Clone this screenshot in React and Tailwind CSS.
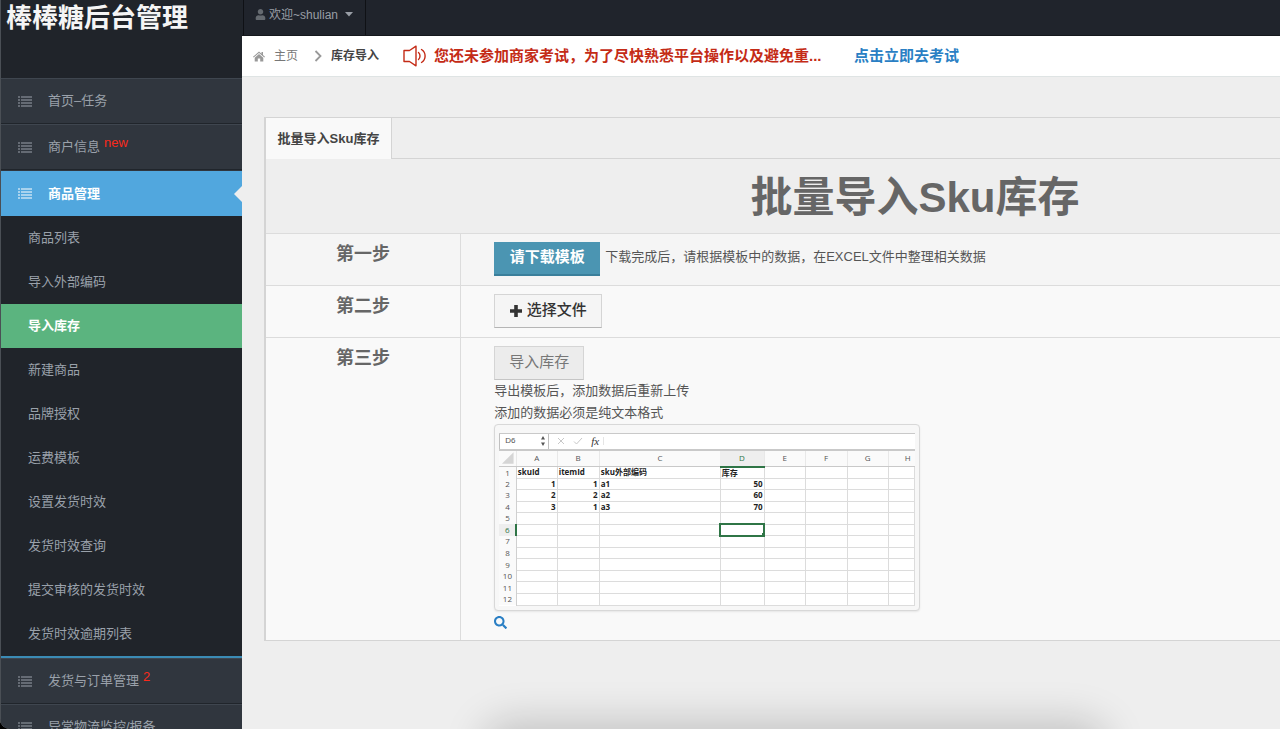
import React, { useState } from "react";
import { FaUser, FaSearch } from "react-icons/fa";

const subItems = [
    "商品列表",
    "导入外部编码",
    "导入库存",
    "新建商品",
    "品牌授权",
    "运费模板",
    "设置发货时效",
    "发货时效查询",
    "提交审核的发货时效",
    "发货时效逾期列表",
];

const columns = ["A", "B", "C", "D", "E", "F", "G", "H"];

const sheetRows = [
    ["skuId", "itemId", "sku外部编码", "库存"],
    ["1", "1", "a1", "50"],
    ["2", "2", "a2", "60"],
    ["3", "1", "a3", "70"],
    [], [], [], [], [], [], [], [],
];

const ListIcon = () => (
    <svg viewBox="0 0 14 11" className="w-[14px] h-[11px] shrink-0 opacity-50" fill="currentColor">
        <path d="M0 0h2v2H0zM3 0h11v2H3zM0 3h2v2H0zM3 3h11v2H3zM0 6h2v2H0zM3 6h11v2H3zM0 9h2v2H0zM3 9h11v2H3z" />
    </svg>
);

const HomeIcon = () => (
    <svg viewBox="0 0 12 11" className="w-3 h-[11px] shrink-0" fill="#999">
        <path d="M6 .5L8.500 2.700V1H10v3L12 5.800l-.7.800L6 2 .7 6.600 0 5.800z" />
        <path d="M6 3l4.300 3.700V10.500H7.200V7.500H4.800v3H1.700V6.700z" />
    </svg>
);

const SpeakerIcon = () => (
    <svg viewBox="0 0 24 22" className="w-6 h-[22px] shrink-0" fill="none" stroke="currentColor" strokeWidth="1.4" strokeLinejoin="round" strokeLinecap="round">
        <path d="M1 5.500h5.500L13 1.200v19.600L6.500 16.500H1z" />
        <path d="M15.500 7.500c2 1.800 2 5.200 0 7M18.500 4.500c4.800 3 4.800 10 0 13" />
    </svg>
);

const MenuItem = ({ label, badge, active }) => (
    <li
        className={active
            ? "relative h-[46px] border-t border-[#30363e] bg-[#51a7de] text-white"
            : "relative h-[46px] border-t border-[#3f464f] border-b border-b-[#20252b] bg-[#30363e] text-[#9aa1aa]"}
    >
        <a href="#" className={active ? "flex h-full items-center pl-[17px] font-bold" : "flex h-full items-center pl-[17px]"}>
            <ListIcon />
            <span className="ml-4">{label}</span>
            {badge && <sup className="ml-1 -top-1 text-[13px] text-[#fa2a1c]">{badge}</sup>}
        </a>
        {active && (
            <span className="absolute right-0 top-[15px] border-y-8 border-r-8 border-y-transparent border-r-[#eee]" />
        )}
    </li>
);

const Sidebar = () => (
    <aside className="w-[242px] shrink-0 overflow-hidden border-l border-[#4a4f55] bg-[#20242a]">
        <div className="h-[78px] pl-[5px] text-[26px] leading-9 font-bold text-[#f5f5f5]">棒棒糖后台管理</div>
        <ul className="text-[13px]">
            <MenuItem label="首页–任务" />
            <MenuItem label="商户信息" badge="new" />
            <MenuItem label="商品管理" active />
            <li>
                <ul className="border-b-2 border-[#3b8bb5]">
                    {subItems.map((item) => (
                        <li key={item}>
                            <a
                                href="#"
                                className={item === "导入库存"
                                    ? "flex h-11 items-center bg-[#5bb47f] pl-[27px] font-bold text-white"
                                    : "flex h-11 items-center pl-[27px] text-[#9aa1aa]"}
                            >
                                {item}
                            </a>
                        </li>
                    ))}
                </ul>
            </li>
            <MenuItem label="发货与订单管理" badge="2" />
            <MenuItem label="异常物流监控/报备" />
        </ul>
    </aside>
);

const cellClass = (row, col) => {
    if (row === 5 && col === 3) return "relative border border-[#dcdcdc] outline-2 -outline-offset-1 outline-[#2f7546]";
    if (row > 0 && col !== 2) return "border border-[#dcdcdc] px-px text-right";
    return "border border-[#dcdcdc] px-px text-left";
};

const SheetPreview = () => (
    <div className="w-[426px] rounded-[4px] border border-[#d8d8d8] bg-[#f7f7f7] px-1 pt-2 pb-1 text-[8px] text-[#555] shadow-[0_1px_2px_rgba(0,0,0,0.08)]">
        <div className="flex h-[18px] items-center border-y border-b-2 border-[#c9c9c9] bg-white">
            <div className="flex h-full w-[50px] items-center justify-between border-x border-[#c0c0c0] pl-[5px] pr-[3px]">
                <span>D6</span>
                <svg viewBox="0 0 4 10" className="w-1 h-[10px]" fill="#555">
                    <path d="M2 0l2 3.500H0zM2 10l2-3.500H0z" />
                </svg>
            </div>
            <svg viewBox="0 0 26 8" className="ml-2 w-[26px] h-2" fill="none" stroke="#c8c8c8">
                <path d="M1 1l6 6M7 1L1 7M17 4.500l2.500 2.500L25 1" />
            </svg>
            <span className="ml-2 font-['Liberation_Serif',serif] text-[11px] italic leading-none text-[#333]">fx</span>
            <span className="ml-1 h-2 border-l border-[#e5e5e5]" />
        </div>
        <table className="h-[155px] w-full table-fixed border-collapse bg-white leading-[8px] font-['Open_Sans','Noto_Sans_CJK_SC',sans-serif]">
            <colgroup>
                <col className="w-[17px]" />
                <col className="w-[41px]" />
                <col className="w-[42px]" />
                <col className="w-[121px]" />
                <col className="w-[44px]" />
                <col className="w-[41px]" />
                <col className="w-[42px]" />
                <col className="w-[41px]" />
                <col />
            </colgroup>
            <thead>
                <tr className="h-4 bg-[#fafafa]">
                    <th aria-label="全选" className="border-b border-[#c9c9c9] p-0">
                        <svg viewBox="0 0 17 14" className="h-[14px] w-full" fill="#d5d5d5">
                            <path d="M15 1v12H3z" />
                        </svg>
                    </th>
                    {columns.map((name) => (
                        <th
                            key={name}
                            className={name === "D"
                                ? "border-b-2 border-[#2f7546] bg-[#eee] p-0 font-normal text-[#2f7546]"
                                : name === "H"
                                ? "border-b border-l border-b-[#c9c9c9] border-l-[#e8e8e8] p-0 pr-1 text-right font-normal"
                                : "border-b border-l border-b-[#c9c9c9] border-l-[#e8e8e8] p-0 font-normal"}
                        >
                            {name}
                        </th>
                    ))}
                </tr>
            </thead>
            <tbody className="font-bold text-[#222]">
                {sheetRows.map((row, r) => (
                    <tr key={r} className="h-[11px]">
                        <th
                            className={r === 5
                                ? "border-r-2 border-[#2f7546] bg-[#eee] p-0 font-normal text-[#2f7546]"
                                : "border-r border-[#d0d0d0] bg-[#fafafa] p-0 font-normal text-[#555]"}
                        >
                            {r + 1}
                        </th>
                        {columns.map((name, c) => (
                            <td key={name} className={`py-0 whitespace-nowrap ${cellClass(r, c)}`}>
                                {row[c]}
                                {r === 5 && c === 3 && (
                                    <span className="absolute -right-px -bottom-px size-[3px] bg-[#2f7546]" />
                                )}
                            </td>
                        ))}
                    </tr>
                ))}
            </tbody>
        </table>
    </div>
);

const App = () => {
    const [fileName, setFileName] = useState("");

    return (
        <div className="h-screen bg-black font-['Liberation_Sans','Noto_Sans_CJK_SC',sans-serif]">
            <div className="relative flex h-full overflow-hidden rounded-bl-[10px] bg-[#eee]">
                <Sidebar />

                <div className="min-w-0 flex-1 overflow-hidden">
                    {/* Top bar */}
                    <header className="flex h-9 border-b border-[#15181d] bg-[#20242c] pl-px text-xs text-[#999ea6]">
                        <button className="flex w-[123px] items-center border-x border-[#0f1115] pb-[6px] pl-[11px]">
                            <FaUser className="size-[11px] text-[#656a70]" />
                            <span className="ml-[3px]">欢迎~shulian</span>
                            <svg viewBox="0 0 8 5" className="ml-[7px] h-[5px] w-2" fill="currentColor">
                                <path d="M0 0h8L4 4.500z" />
                            </svg>
                        </button>
                    </header>

                    {/* Breadcrumb */}
                    <nav className="flex h-[41px] items-center border-b border-[#dfe4e4] bg-white pl-[11px] text-xs text-[#777]">
                        <HomeIcon />
                        <a href="#" className="ml-[9px]">主页</a>
                        <svg viewBox="0 0 8 12" className="ml-4 h-3 w-2" fill="none" stroke="#999" strokeWidth="1.8">
                            <path d="M1.500 1l5 5-5 5" />
                        </svg>
                        <span className="ml-[9px] font-bold text-[#444]">库存导入</span>
                        <div className="ml-6 flex items-center text-[15px] font-bold text-[#c42b16]">
                            <SpeakerIcon />
                            <span className="ml-[7px] w-[411px]">您还未参加商家考试，为了尽快熟悉平台操作以及避免重...</span>
                        </div>
                        <a href="#" className="ml-[9px] text-[15px] font-bold text-[#2a7fc4]">点击立即去考试</a>
                    </nav>

                    {/* Content */}
                    <main className="pt-10 pl-[22px] text-[13px] text-[#555]">
                        <div className="min-w-[1300px] border-y border-l-2 border-[#d4d4d4]">
                            <div className="flex h-[41px]">
                                <button className="w-[126px] border-r border-[#d4d4d4] bg-[#f9f9f9] text-center font-bold text-[#444]">
                                    批量导入Sku库存
                                </button>
                                <div className="flex-1 border-b border-[#d4d4d4]" />
                            </div>
                            <table className="w-full table-fixed border-collapse">
                                <colgroup>
                                    <col className="w-[15%]" />
                                    <col />
                                </colgroup>
                                <tbody>
                                    <tr className="h-[74px]">
                                        <th colSpan={2} className="p-0 pt-1 text-[42px] leading-[60px] font-bold text-[#666]">批量导入Sku库存</th>
                                    </tr>
                                    <tr className="h-[52px] border-t border-[#dcdcdc] bg-[#f5f5f5] align-top">
                                        <th className="border-r border-[#dcdcdc] pt-2 text-lg leading-6 font-bold text-[#666]">第一步</th>
                                        <td className="pt-2 pl-[33px]">
                                            <div className="flex items-start">
                                                <button className="h-[34px] w-[106px] border-b-2 border-[#3a7f9b] bg-[#4b95b2] text-[15px] font-bold text-white">
                                                    请下载模板
                                                </button>
                                                <span className="ml-[5px] leading-[30px]">下载完成后，请根据模板中的数据，在EXCEL文件中整理相关数据</span>
                                            </div>
                                        </td>
                                    </tr>
                                    <tr className="h-[52px] border-t border-[#dcdcdc] bg-[#f9f9f9] align-top">
                                        <th className="border-r border-[#dcdcdc] pt-2 text-lg leading-6 font-bold text-[#666]">第二步</th>
                                        <td className="pt-2 pl-[33px]">
                                            <label
                                                title={fileName}
                                                className="relative flex h-[34px] w-[108px] cursor-pointer items-center justify-center gap-[5px] border border-[#d5d5d5] border-b-[#b5b5b5] bg-[#f5f5f5] text-[15px] font-medium text-[#333]"
                                            >
                                                <svg viewBox="0 0 12 12" className="size-3" fill="currentColor">
                                                    <path d="M4.200 0h3.600v4.200H12v3.600H7.800V12H4.200V7.800H0V4.200h4.200z" />
                                                </svg>
                                                选择文件
                                                <input
                                                    type="file"
                                                    className="sr-only"
                                                    onChange={(e) => setFileName(e.target.files[0]?.name || "")}
                                                />
                                            </label>
                                        </td>
                                    </tr>
                                    <tr className="h-[303px] border-t border-[#dcdcdc] bg-[#f9f9f9] align-top">
                                        <th className="border-r border-[#dcdcdc] pt-2 text-lg leading-6 font-bold text-[#666]">第三步</th>
                                        <td className="pt-2 pl-[33px]">
                                            <button
                                                disabled={!fileName}
                                                className="block h-[34px] w-[90px] border border-[#d5d5d5] border-b-[#c5c5c5] bg-[#ececec] text-[15px] text-[#777]"
                                            >
                                                导入库存
                                            </button>
                                            <p className="leading-[22px]">导出模板后，添加数据后重新上传</p>
                                            <p className="leading-[22px]">添加的数据必须是纯文本格式</p>
                                            <SheetPreview />
                                            <a href="#" aria-label="放大" className="mt-[5px] inline-block text-[#2a7fc4]">
                                                <FaSearch className="size-[13px]" />
                                            </a>
                                        </td>
                                    </tr>
                                </tbody>
                            </table>
                        </div>
                    </main>
                </div>

                {/* Soft shadow along the bottom edge */}
                <div className="absolute -bottom-10 left-[490px] right-[180px] h-10 rounded-[20px] shadow-[0_0_40px_8px_rgba(0,0,0,0.18)]" />
            </div>
        </div>
    );
};

export default App;
